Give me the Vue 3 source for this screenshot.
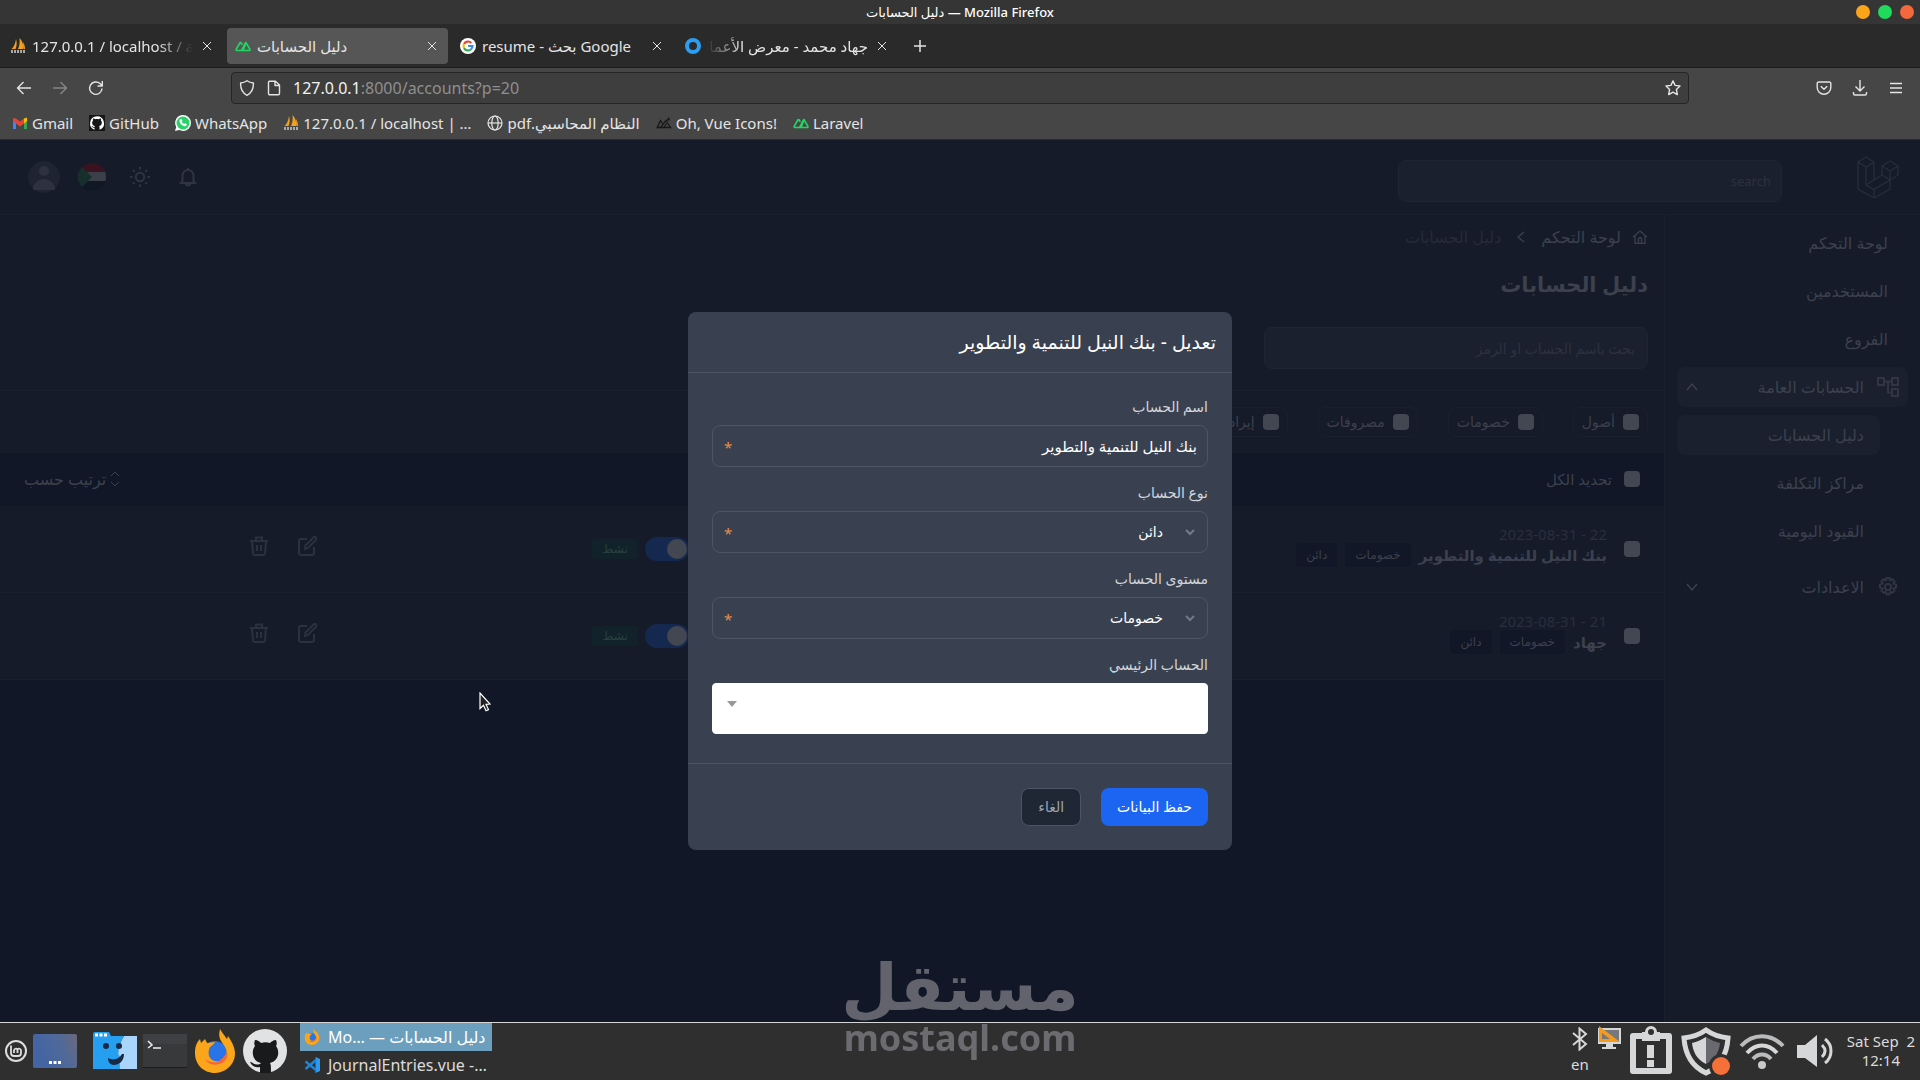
<template>
  <div class="desktop">
    <header class="browser">
      <div class="titlebar">
        <span class="window-title">دليل الحسابات — Mozilla Firefox</span>
        <div class="window-buttons">
          <button class="dot orange" aria-label="Minimize"></button>
          <button class="dot green" aria-label="Maximize"></button>
          <button class="dot red" aria-label="Close"></button>
        </div>
      </div>

      <nav class="tabs">
        <div v-for="t in tabs" :key="t.icon" class="tab" :class="{ active: t.active, 'fade-end': t.fade === 'end', 'fade-start': t.fade === 'start' }">
          <svg class="fav" viewBox="0 0 16 16"><use :href="'#i-' + t.icon" /></svg>
          <span class="tab-text" :dir="t.dir">{{ t.title }}</span>
          <button class="tab-close" aria-label="Close tab">
            <svg viewBox="0 0 10 10"><path d="M1 1l8 8M9 1L1 9" /></svg>
          </button>
        </div>
        <button class="new-tab" aria-label="New tab">
          <svg viewBox="0 0 14 14"><path d="M7 1v12M1 7h12" /></svg>
        </button>
      </nav>

      <div class="toolbar">
        <div class="nav-buttons">
          <button class="tool" aria-label="Back"><svg viewBox="0 0 16 16"><path d="M15 8H1.500M7.500 2L1.500 8l6 6" /></svg></button>
          <button class="tool off" aria-label="Forward"><svg viewBox="0 0 16 16"><path d="M1 8h13.500M8.500 2l6 6-6 6" /></svg></button>
          <button class="tool" aria-label="Reload"><svg viewBox="0 0 16 16"><path d="M14 8.500A6.200 6.200 0 1 1 12 3.600L14 5.500M14.300 1v5H9.500" /></svg></button>
        </div>
        <div class="urlbar">
          <svg class="url-icon" viewBox="0 0 16 16"><path d="M8 .8c2 1.500 4 2 6.400 2.200C14.600 8.500 13 13 8 15.300 3 13 1.400 8.500 1.600 3 4 2.800 6 2.300 8 .8z" /></svg>
          <svg class="url-icon" viewBox="0 0 16 16"><path d="M3.500 1.200h6L13.500 5v8.500a1.300 1.300 0 0 1-1.300 1.300H3.800a1.300 1.300 0 0 1-1.300-1.300V2.200a1 1 0 0 1 1-1zM9 1.500V5.500h4.500" /></svg>
          <div class="url" dir="ltr"><b>127.0.0.1</b>:8000/accounts?p=20</div>
          <svg class="url-icon" viewBox="0 0 16 16"><path d="M8 .9l2.100 4.500 4.900.6-3.600 3.400.9 5.200L8 12.100l-4.300 2.500.9-5.200L1 6l4.900-.6z" /></svg>
        </div>
        <div class="nav-buttons end">
          <button class="tool" aria-label="Pocket"><svg viewBox="0 0 16 16"><path d="M2.500 2h11a1.300 1.300 0 0 1 1.300 1.300V7.500a6.800 6.800 0 0 1-13.600 0V3.300A1.300 1.300 0 0 1 2.500 2zM4.800 6.200L8 9.300l3.200-3.100" /></svg></button>
          <button class="tool" aria-label="Downloads"><svg viewBox="0 0 16 16"><path d="M8 0v10.500M3.500 6.500L8 11l4.500-4.500M1.500 12v1.500A1.500 1.500 0 0 0 3 15h10a1.500 1.500 0 0 0 1.500-1.500V12" /></svg></button>
          <button class="tool" aria-label="Menu"><svg viewBox="0 0 16 16"><path d="M2 3.500h12M2 8h12M2 12.500h12" /></svg></button>
        </div>
      </div>

      <div class="bookmarks">
        <a v-for="b in bookmarks" :key="b.title" href="#" class="bookmark">
          <svg class="fav" viewBox="0 0 16 16"><use :href="'#i-' + b.icon" /></svg>
          <span :dir="b.dir">{{ b.title }}</span>
        </a>
      </div>
    </header>

    <div class="app" dir="rtl">
      <div class="app-header">
        <svg class="brand" viewBox="0 0 42 42">
          <path d="M1 6l8-5 8 5v18l8-5V10l8-5 8 5v9l-8 5v9L17 42 1 33zM1 6l8 5 8-5M9 11v18l8 4.500V42M9 29l16-10 8 5M17 33.500L33 24M25 10l8 5 8-5M33 15v9" />
        </svg>
        <input class="top-search" type="search" placeholder="search" aria-label="search" />
        <div class="header-icons">
          <button aria-label="الإشعارات"><svg class="line" viewBox="0 0 20 20"><path d="M4.500 14V8.500a5.500 5.500 0 0 1 11 0V14l1.500 2H3zM10 3V1M8 16.500a2 2 0 0 0 4 0" /></svg></button>
          <button aria-label="المظهر"><svg class="line" viewBox="0 0 20 20"><circle cx="10" cy="10" r="4.200" /><path d="M10 0v2.500M10 17.500V20M0 10h2.500M17.500 10H20M3 3l1.700 1.700M15.300 15.300L17 17M3 17l1.700-1.700M15.300 4.700L17 3" /></svg></button>
          <button aria-label="اللغة">
            <svg class="flag" viewBox="0 0 28 28">
              <clipPath id="flagclip"><circle cx="14" cy="14" r="14" /></clipPath>
              <g clip-path="url(#flagclip)">
                <path fill="#3b1320" d="M0 0h28v9H0z" /><path fill="#3a3f4a" d="M0 9h28v9H0z" /><path fill="#111825" d="M0 18h28v10H0z" /><path fill="#172f2c" d="M0 0l14 14L0 28z" />
              </g>
            </svg>
          </button>
          <button aria-label="الحساب">
            <svg class="avatar" viewBox="0 0 32 32"><circle cx="16" cy="16" r="16" fill="#1e2431" /><circle cx="16" cy="10" r="5" fill="#2d323e" /><path fill="#2d323e" d="M5 29c0-7 5-11 11-11s11 4 11 11z" /></svg>
          </button>
        </div>
      </div>

      <div class="app-body">
        <aside class="sidebar">
          <a v-for="m in menu" :key="m" href="#" class="side-link">{{ m }}</a>
          <a href="#" class="side-link group open">
            <svg class="side-icon" viewBox="0 0 22 20"><path d="M1 1h6v7H1zM15 1h6v7h-6zM15 12h6v7h-6zM7 4.500h8M11 4.500v11h4" /></svg>
            <span>الحسابات العامة</span>
            <svg class="caret" viewBox="0 0 12 12"><path d="M1 9l5-6 5 6" /></svg>
          </a>
          <a v-for="(m, i) in subMenu" :key="m" href="#" class="side-link sub" :class="{ current: i === 0 }">{{ m }}</a>
          <a href="#" class="side-link group settings">
            <svg class="side-icon" viewBox="0 0 22 20"><circle cx="11" cy="10" r="3" /><path d="M9.500 1h3l.7 2.400 2.200-1.200 2.200 2.200-1.200 2.200 2.600.8v3.200l-2.600.8 1.200 2.200-2.200 2.200-2.200-1.200-.7 2.600h-3l-.7-2.600-2.200 1.200-2.200-2.200 1.200-2.200L3 10.600V7.400l2.600-.8-1.200-2.200 2.200-2.200 2.200 1.200z" /></svg>
            <span>الاعدادات</span>
            <svg class="caret" viewBox="0 0 12 12"><path d="M1 3l5 6 5-6" /></svg>
          </a>
        </aside>

        <main class="content">
          <section class="top">
            <div class="crumbs">
              <svg class="home" viewBox="0 0 14 14"><path d="M0 7l7-6 7 6M2 6v7.300h10V6M5.500 13V9a1.500 1.500 0 0 1 3 0v4" /></svg>
              <a href="#">لوحة التحكم</a>
              <svg class="sep" viewBox="0 0 8 12"><path d="M7 1L1 6l6 5" /></svg>
              <span>دليل الحسابات</span>
            </div>
            <h1>دليل الحسابات</h1>
            <input class="search" type="search" placeholder="بحث باسم الحساب او الرمز" aria-label="بحث باسم الحساب او الرمز" />
          </section>

          <section class="filters">
            <label v-for="f in filters" :key="f" class="chip"><input type="checkbox" />{{ f }}</label>
          </section>

          <table class="accounts">
            <colgroup><col class="c-name" /><col class="c-status" /><col class="c-actions" /></colgroup>
            <thead>
              <tr>
                <th><label class="select-all"><input type="checkbox" />تحديد الكل</label></th>
                <th></th>
                <th>
                  <button class="sort">
                    <svg viewBox="0 0 10 16"><path d="M1 5l4-4 4 4M1 11l4 4 4-4" /></svg>ترتيب حسب
                  </button>
                </th>
              </tr>
            </thead>
            <tbody>
              <tr v-for="a in accounts" :key="a.id">
                <td>
                  <div class="account">
                    <input type="checkbox" :aria-label="a.name" />
                    <div class="info">
                      <div class="date" dir="ltr">{{ a.date }} - {{ a.id }}</div>
                      <div class="name-line"><strong>{{ a.name }}</strong><span class="tag">خصومات</span><span class="tag">دائن</span></div>
                    </div>
                  </div>
                </td>
                <td>
                  <div class="status"><input type="checkbox" class="toggle" checked :aria-label="'حالة ' + a.name" /><span class="badge">نشط</span></div>
                </td>
                <td>
                  <div class="actions">
                    <button aria-label="تعديل"><svg viewBox="0 0 20 20"><path d="M10 3H4a2 2 0 0 0-2 2v12a2 2 0 0 0 2 2h11a2 2 0 0 0 2-2v-6M8 13l.5-3.500L16.500 1.500a1.500 1.500 0 0 1 2.500 2.200L11 12z" /></svg></button>
                    <button aria-label="حذف"><svg viewBox="0 0 20 20"><path d="M1 5h18M3 5l1 12.500A1.600 1.600 0 0 0 5.500 19h9a1.600 1.600 0 0 0 1.500-1.500L17 5M7 5V1.500h6V5M8 9v6M12 9v6" /></svg></button>
                  </div>
                </td>
              </tr>
            </tbody>
          </table>
        </main>
      </div>

      <div class="overlay">
        <form class="modal" role="dialog" aria-labelledby="modal-title" @submit.prevent>
          <h2 id="modal-title">تعديل - بنك النيل للتنمية والتطوير</h2>
          <div class="modal-body">
            <div class="field">
              <label for="name">اسم الحساب</label>
              <div class="control">
                <input id="name" v-model="form.name" type="text" />
                <span class="required">*</span>
              </div>
            </div>
            <div class="field">
              <label for="type">نوع الحساب</label>
              <div class="control">
                <select id="type" v-model="form.type"><option>دائن</option><option>مدين</option></select>
                <svg class="arrow" viewBox="0 0 10 8"><path d="M1 2l4 4 4-4" /></svg>
                <span class="required">*</span>
              </div>
            </div>
            <div class="field">
              <label for="level">مستوى الحساب</label>
              <div class="control">
                <select id="level" v-model="form.level"><option v-for="f in filters" :key="f">{{ f }}</option></select>
                <svg class="arrow" viewBox="0 0 10 8"><path d="M1 2l4 4 4-4" /></svg>
                <span class="required">*</span>
              </div>
            </div>
            <div class="field">
              <label for="parent">الحساب الرئيسي</label>
              <div class="control">
                <select id="parent" v-model="form.parent" class="plain"><option value=""></option></select>
                <svg class="triangle" viewBox="0 0 10 6"><path d="M0 0h10L5 6z" /></svg>
              </div>
            </div>
          </div>
          <div class="modal-footer">
            <button class="save" type="submit">حفظ البيانات</button>
            <button class="cancel" type="button">الغاء</button>
          </div>
        </form>
      </div>
      <svg class="cursor" viewBox="0 0 12 20"><path d="M1 1v15.500l3.500-3.300 2.500 5.600 2.500-1.200L7 12.300l4-.3z" /></svg>
    </div>

    <footer class="taskbar">
      <div class="launchers">
        <button class="launcher small" aria-label="Menu">
          <svg viewBox="0 0 22 22"><circle cx="11" cy="11" r="10" fill="none" stroke="#ddd" stroke-width="2" /><path d="M6 5.500v7.500a3 3 0 0 0 3 3h4a3 3 0 0 0 3-3v-2.500a2 2 0 0 0-3.500-1.200A2 2 0 0 0 9 10.500V13M12.500 10v3" fill="none" stroke="#ddd" stroke-width="1.800" /></svg>
        </button>
        <button class="launcher" aria-label="Desktop">
          <svg viewBox="0 0 44 44">
            <linearGradient id="desk" x2="1" y2="-.3"><stop stop-color="#4465a3" /><stop offset=".5" stop-color="#50699a" /><stop offset="1" stop-color="#6e6a74" /></linearGradient>
            <rect y="5" width="44" height="34" rx="2" fill="url(#desk)" /><path fill="#fff" d="M16 32h3v3h-3zM20.500 32h3v3h-3zM25 32h3v3h-3z" />
          </svg>
        </button>
        <button class="launcher files" aria-label="Files">
          <svg viewBox="0 0 44 44"><path fill="#279ff0" d="M0 5a2 2 0 0 1 2-2h14l2 4h9v33H0z" /><path fill="#a9d4fb" d="M31 7h13v33H27c0-7-1-10 0-13-3 0-2-11 4-20z" /><path fill="#279ff0" d="M26 7h5c-5 8-6 13-5 17z" /><path d="M2 6h12" stroke="#fff" stroke-width="3" stroke-dasharray="3 1.500" /><circle cx="13" cy="17" r="3" fill="#182943" /><circle cx="26" cy="17" r="3" fill="#182943" /><path fill="#182943" d="M15 29c6 3 11 1 14-4h2c0 7-5 11-10 11-4 0-6-3-6-7z" /></svg>
        </button>
        <button class="launcher" aria-label="Terminal">
          <svg viewBox="0 0 44 44"><rect y="5" width="44" height="34" rx="1" fill="#38393a" /><path fill="#45484b" d="M0 5h44v10H0z" opacity=".5" /><path d="M0 38.500h44" stroke="#1d1d1d" /><path d="M5 12l4 4-4 3M10 19h8" fill="none" stroke="#eee" stroke-width="1.500" /></svg>
        </button>
        <button class="launcher" aria-label="Firefox"><svg viewBox="0 0 44 44"><use href="#i-firefox" /></svg></button>
        <button class="launcher" aria-label="GitHub Desktop">
          <svg viewBox="0 0 44 44"><circle cx="22" cy="22" r="22" fill="#e1e2e4" /><path fill="#191a1c" d="M12 11c3 0 5 2 6 3 3-1 6-1 9 0 1-1 3-3 6-3 1 3 1 4 0 6 4 5 3 15-6 17 1 2 1 3 1 10H17v-6c-5 1-8-1-10-5 3 0 4 4 10 2l1-1c-9-2-10-12-6-17-1-2-1-3 0-6z" /></svg>
        </button>
      </div>
      <div class="tasks">
        <button class="task on" dir="ltr">
          <svg class="fav" viewBox="0 0 44 44"><use href="#i-firefox" /></svg>
          <span dir="rtl">دليل الحسابات — <bdi>Mo…</bdi></span>
        </button>
        <button class="task">
          <svg class="fav" viewBox="0 0 16 16"><path fill="#2a9bf2" d="M11.500 0L16 2v12l-4.500 2z" /><path d="M12 3L1.500 12M12 13L1.500 4.500" stroke="#1f83d6" stroke-width="2.500" fill="none" /></svg>
          <span>JournalEntries.vue -…</span>
        </button>
      </div>
      <div class="tray">
        <div class="tray-grid">
          <svg viewBox="0 0 16 24"><path d="M1 6l13 11-6.500 5.500V1.500L14 7 1 18" fill="none" stroke="#d6d7d9" stroke-width="2" /></svg>
          <span>en</span>
        </div>
        <svg class="screen" viewBox="0 0 24 24"><path fill="#d6d7d9" d="M1 2h23v16H1zM9 18h7v3h3v2H5v-2h4z" /><path fill="#77787c" d="M3 4h19v12H3z" /><path fill="#f69a1d" d="M2 0l21 16H2z" /><path fill="#77787c" d="M5 7l8 6H5z" /></svg>
        <svg class="clip" viewBox="0 0 44 50"><path d="M4 10h36v35H4z" fill="none" stroke="#d6d7d9" stroke-width="6" stroke-linejoin="round" /><path fill="#d6d7d9" d="M13 6h3a6 6 0 0 1 12 0h3v9H13zM18 19h7v13h-7zM18 34h7v7h-7z" /><circle cx="22" cy="6" r="3" fill="#2f2f2f" /></svg>
        <svg class="guard" viewBox="0 0 50 50"><path d="M25 4c7 5 13 7 22 8-1 15-7 28-22 35C10 40 4 27 3 12c9-1 15-3 22-8z" fill="none" stroke="#d6d7d9" stroke-width="5" /><path fill="#d6d7d9" d="M25 11v27C15 33 12 25 11 17c5-1 9-3 14-6z" /><path fill="#6a6870" d="M25 11v27c10-5 13-13 14-21-5-1-9-3-14-6z" /><circle cx="40" cy="40" r="12" fill="#2f2f2f" /><circle cx="40" cy="40" r="9" fill="#f6703a" /></svg>
        <svg class="wifi" viewBox="0 0 46 36"><g fill="none" stroke="#b9bbbd" stroke-width="4"><path d="M2 13c12-13 30-13 42 0" /><path d="M8 20c9-10 21-10 30 0" stroke="#d6d7d9" /><path d="M14 26c5-6 13-6 18 0" /></g><circle cx="23" cy="32" r="4" fill="#c9cacc" /></svg>
        <svg class="volume" viewBox="0 0 38 34"><path fill="#d6d7d9" d="M0 11h8L20 1v32L8 24H0z" /><path d="M25 11c4 4 4 8 0 12M28 5c8 6 8 18 0 24" fill="none" stroke="#d6d7d9" stroke-width="3" /></svg>
        <time class="clock">Sat Sep&nbsp; 2<br />12:14</time>
      </div>
    </footer>

    <div class="watermark">
      <span class="wm-ar" dir="rtl">مستقل</span>
      <span class="wm-en">mostaql.com</span>
    </div>

    <!-- shared icons -->
    <svg class="sprite">
      <symbol id="i-pma" viewBox="0 0 16 16"><path fill="#f5a11c" d="M6 1c1 3 1 7-.5 10H1.500C4 9 5.500 5 6 1zM9.500 0c3 3 4.500 8 3.500 11H8c1.500-3 2-7 1.500-11zM13 4c1.500 2 2 5 2 7h-1.500z" /><path d="M1 13.500h14" stroke="#a9a9a9" stroke-width="3" stroke-dasharray="2 1" /></symbol>
      <symbol id="i-laravel" viewBox="0 0 16 16"><path d="M8.300 12.500H1.800a.7.700 0 0 1-.6-1.100L4.800 5a.8.800 0 0 1 1.400 0l1 1.800M15 12.500H8.800l-.500-.9 2.700-7 3.900 6.800a.7.700 0 0 1-.6 1.100M6.300 12.400c2-1.400 2.500-5.400 4.500-8" fill="none" stroke="#21d563" stroke-width="1.700" stroke-linejoin="round" /></symbol>
      <symbol id="i-google" viewBox="0 0 16 16"><circle cx="8" cy="8" r="8" fill="#fff" /><g fill="none" stroke-width="2.200"><path stroke="#e94235" d="M11.300 4.900A4.500 4.500 0 0 0 4 6" /><path stroke="#fabb05" d="M4 6a4.500 4.500 0 0 0 0 4" /><path stroke="#34a853" d="M4 10a4.500 4.500 0 0 0 6.800 1.500" /><path stroke="#4285f4" d="M10.800 11.500A4.500 4.500 0 0 0 12.500 8H8" /></g></symbol>
      <symbol id="i-mostaql" viewBox="0 0 16 16"><circle cx="8" cy="8" r="6" fill="none" stroke="#2b9df2" stroke-width="4" /></symbol>
      <symbol id="i-gmail" viewBox="0 0 16 16"><path fill="#4285f4" d="M1 4.500l3 2V14H1z" /><path fill="#34a853" d="M12 6.500l3-2V14h-3z" /><path fill="#fbbc04" d="M12 3.500l3-1V6l-3 2.500z" /><path fill="#ea4335" d="M1 3l3 .5 4 3 4-3v5l-4 3-4-3-3-2.500z" /></symbol>
      <symbol id="i-github" viewBox="0 0 16 16"><path fill="#161616" d="M0 0h16v16H0z" /><path fill="#fff" d="M8 1.200a7 7 0 0 0-2.500 13.500v-2C3.500 13 3 11.500 2.500 11c1.500-.2 1.500 1.300 3 1l.4-1C3 10.500 2.500 7 4 5.500c-.2-1 0-1.500.2-2 1 0 1.500.5 2 .8 1.200-.3 2.400-.3 3.600 0 .5-.3 1-.8 2-.8.200.5.400 1 .2 2 1.500 1.500 1 5-1.900 5.500.5.500.5 1 .5 3.700A7 7 0 0 0 8 1.200z" /></symbol>
      <symbol id="i-whatsapp" viewBox="0 0 16 16"><path fill="#fff" d="M8 0a8 8 0 0 1 0 16l-4-1-4 1 1.200-4A8 8 0 0 1 8 0z" /><circle cx="8" cy="8" r="6.500" fill="#25d366" /><path fill="#fff" d="M5.500 4l1.300.2.600 1.700-.6.900c.5 1 1.300 1.700 2.300 2.200l.9-.8 1.800.9c0 2-1.500 2.600-3 2C6.500 10.300 4.500 8 4.500 6c0-1 .4-1.700 1-2z" /></symbol>
      <symbol id="i-globe" viewBox="0 0 16 16"><g fill="none" stroke="#e4e4e4" stroke-width="1.200"><circle cx="8" cy="8" r="7" /><ellipse cx="8" cy="8" rx="3.200" ry="7" /><path d="M1 8h14" /></g></symbol>
      <symbol id="i-ohvue" viewBox="0 0 16 16"><path d="M5 12.500H1.200L4.500 5.500l2 3M4.500 12.500L10 5.500l4.500 7zM8 12.500l2.500-4M9.500 6.500L13 3.500M13 2.500v3" fill="none" stroke="#171717" stroke-width="1.300" /></symbol>
      <symbol id="i-firefox" viewBox="0 0 44 44"><circle cx="22" cy="24" r="12" fill="#2874e8" /><path fill="#fba51b" d="M27 0c3 5 5 7 7 10l1-3c7 10 9 18 5 26-4 7-11 11-18 11C10 44 2 35 2 24c0-7 2-11 5-14l1 4 4-4 2 4 8-1c-2 4-6 4-6 8-2 6 3 13 10 11 6-1 9-6 7-12-3-7-9-9-6-20z" /><path fill="#f0693a" d="M34 23c2 5-2 11-8 12-6 2-12-1-14-5 5 4 10 4 14 2 3-2 6-5 8-9z" /></symbol>
    </svg>
  </div>
</template>

<script setup>
import { reactive } from "vue";

const tabs = [
  { icon: "pma", title: "127.0.0.1 / localhost / a", dir: "ltr", fade: "end" },
  { icon: "laravel", title: "دليل الحسابات", dir: "ltr", active: true },
  { icon: "google", title: "resume - بحث Google", dir: "ltr" },
  { icon: "mostaql", title: "جهاد محمد - معرض الأعمال", dir: "rtl", fade: "start" },
];
const bookmarks = [
  { icon: "gmail", title: "Gmail" },
  { icon: "github", title: "GitHub" },
  { icon: "whatsapp", title: "WhatsApp" },
  { icon: "pma", title: " 127.0.0.1 / localhost | …" },
  { icon: "globe", title: "النظام المحاسبي.pdf", dir: "rtl" },
  { icon: "ohvue", title: "Oh, Vue Icons!" },
  { icon: "laravel", title: "Laravel" },
];
const menu = ["لوحة التحكم", "المستخدمين", "الفروع"];
const subMenu = ["دليل الحسابات", "مراكز التكلفة", "القيود اليومية"];
const filters = ["أصول", "خصومات", "مصروفات", "إيرادات"];
const accounts = [
  { id: 22, date: "2023-08-31", name: "بنك النيل للتنمية والتطوير" },
  { id: 21, date: "2023-08-31", name: "جهاد" },
];
const form = reactive({
  name: "بنك النيل للتنمية والتطوير",
  type: "دائن",
  level: "خصومات",
  parent: "",
});
</script>

<style>
body { background: #111726; }
</style>

<style scoped>
* { box-sizing: border-box; }
.desktop { position: relative; display: flex; flex-direction: column; min-height: 100vh; overflow: hidden; font-family: "Noto Sans", "DejaVu Sans", sans-serif; }
button { border: 0; padding: 0; background: none; color: inherit; font: inherit; }
input, select { font: inherit; margin: 0; }
a { color: inherit; text-decoration: none; }
svg { display: block; flex: none; }
.sprite { position: absolute; width: 0; height: 0; }
.fav { width: 16px; height: 16px; }

/* browser window */
.browser { color: #e4e4e4; background: #464646; font-size: 15px; line-height: 20px; border-bottom: 1px solid #2b2b2b; }
.titlebar { position: relative; display: flex; justify-content: center; align-items: center; height: 24px; background: #353535; color: #fff; font-size: 13px; font-weight: 500; }
.window-buttons { position: absolute; right: 6px; display: flex; gap: 8px; }
.dot { width: 14px; height: 14px; border-radius: 50%; }
.orange { background: #fba51b; }
.green { background: #21d95c; }
.red { background: #f3693d; }
.tabs { display: flex; align-items: center; height: 44px; padding: 0 2px; gap: 4px; background: #2a2a2a; border-bottom: 1px solid #1c1c1c; }
.tab { display: flex; align-items: center; gap: 6px; width: 221px; height: 36px; padding: 0 8px; border-radius: 4px; }
.tab.active { background: #565656; }
.tab-text { flex: 1; overflow: hidden; white-space: nowrap; }
.fade-end .tab-text { mask-image: linear-gradient(to left, transparent, #000 36px); }
.fade-start .tab-text { mask-image: linear-gradient(to right, transparent, #000 36px); }
.tab-close svg { width: 16px; height: 10px; fill: none; stroke: currentColor; stroke-width: 1; }
.new-tab { padding: 0 11px; }
.new-tab svg { width: 14px; height: 14px; stroke: currentColor; stroke-width: 1.5; }
.toolbar { display: flex; align-items: center; height: 40px; padding: 0 16px; }
.nav-buttons { display: flex; gap: 20px; width: 215px; }
.nav-buttons.end { justify-content: flex-end; }
.tool svg, .url-icon { width: 16px; height: 16px; fill: none; stroke: currentColor; stroke-width: 1.4; stroke-linejoin: round; }
.tool.off { color: #858585; }
.urlbar { display: flex; align-items: center; gap: 11px; flex: 1; height: 32px; padding: 0 7px; background: #3e3e3e; border: 1px solid #252525; border-radius: 4px; font-size: 16px; }
.url { flex: 1; color: #8f8f8f; }
.url b { color: #f2f2f2; font-weight: 400; }
.bookmarks { display: flex; align-items: flex-start; gap: 16px; height: 31px; padding: 5px 12px; white-space: nowrap; }
.bookmark { display: flex; align-items: center; gap: 4px; }

/* application */
.app { position: relative; flex: 1; display: flex; flex-direction: column; color: #3c414d; background: #111726; font-size: 14px; line-height: 20px; }
.app-header { display: flex; align-items: center; height: 75px; padding: 0 21px 0 30px; background: #151b29; border-bottom: 1px solid #1a202e; }
.brand { width: 42px; height: 42px; fill: none; stroke: #272d39; stroke-width: 1.3; }
.top-search, .search { width: 384px; height: 42px; padding: 0 12px; color: inherit; background: #1a202e; border: 1px solid #1f2532; border-radius: 8px; }
.top-search { margin-right: 75px; margin-top: 8px; padding: 0 10px; font-size: 13px; }
.top-search::placeholder, .search::placeholder { color: #2c323f; opacity: 1; }
.header-icons { display: flex; align-items: center; gap: 20px; margin-right: auto; }
.header-icons button { display: flex; justify-content: center; width: 28px; }
.header-icons .line { width: 20px; height: 20px; fill: none; stroke: #303541; stroke-width: 2; }
.flag { width: 28px; height: 28px; }
.avatar { width: 32px; height: 32px; }
.app-body { flex: 1; display: flex; }
.sidebar { display: flex; flex-direction: column; gap: 8px; width: 256px; padding: 8px 12px; background: #151b29; border-left: 1px solid #1a202e; font-size: 16px; }
.side-link { display: flex; align-items: center; height: 40px; padding: 0 20px; border-radius: 8px; }
.group { padding: 0 9px; gap: 13px; }
.group span { flex: 1; }
.open, .current { background: #1a202e; }
.sub { margin-right: 28px; padding: 0 16px; }
.settings { margin-top: 8px; }
.side-icon { width: 22px; height: 20px; fill: none; stroke: #303541; stroke-width: 2; }
.caret { width: 12px; height: 12px; fill: none; stroke: currentColor; stroke-width: 1.4; }
.content { flex: 1; min-width: 0; }
.top { height: 176px; padding: 12px 16px 0; background: #151b29; border-bottom: 1px solid #1a202e; }
.crumbs { display: flex; align-items: center; gap: 11px; font-size: 16px; }
.crumbs span { color: #252b38; }
.home { width: 16px; height: 14px; }
.sep { width: 18px; height: 12px; }
.home, .sep { fill: none; stroke: currentColor; stroke-width: 1.3; }
h1 { margin: 20px 0 25px; font-size: 21px; line-height: 35px; }
.filters { display: flex; gap: 30px; height: 62px; padding: 16px 16px; background: #151b29; }
.chip { display: flex; align-items: center; gap: 8px; height: 30px; padding: 0 8px; border: 1px solid #1a202e; border-radius: 8px; white-space: nowrap; }
input[type="checkbox"] { appearance: none; flex: none; width: 16px; height: 16px; background: #434751; border-radius: 4px; }
.accounts { width: 100%; table-layout: fixed; border-collapse: separate; border-spacing: 0; text-align: right; }
.accounts th { height: 53px; padding: 0 24px 2px; font-size: 15px; font-weight: 400; }
.accounts td { height: 87px; padding: 0 24px; background: #151b29; border-bottom: 1px solid #1a202e; vertical-align: middle; }
.c-status { width: 22%; }
.c-actions { width: 20%; }
.select-all { display: flex; align-items: center; gap: 12px; }
.sort { display: flex; align-items: center; gap: 4px; margin-right: auto; font-size: 16px; }
.sort svg { width: 10px; height: 16px; fill: none; stroke: currentColor; }
.account { display: flex; align-items: center; gap: 17px; }
.info { padding-bottom: 8px; }
.date { color: #292f3c; text-align: right; font-size: 15px; }
.name-line { display: flex; align-items: center; gap: 8px; height: 22px; }
.name-line strong { font-size: 15px; }
.tag { padding: 2px 10px; background: #111726; border-radius: 4px; font-size: 12px; white-space: nowrap; }
.accounts td:nth-child(2) { padding-right: 10px; }
.accounts td:nth-child(3) { padding-right: 16px; }
.status { display: flex; align-items: center; gap: 7px; }
.accounts .toggle { display: flex; width: 44px; height: 24px; padding: 2px; background: #15284f; border-radius: 12px; }
.toggle::after { content: ""; width: 20px; height: 20px; background: #434751; border-radius: 50%; }
.badge { padding: 0 10px; background: #12222b; color: #27413f; border-radius: 4px; font-size: 12px; }
.actions { display: flex; gap: 28px; padding-bottom: 6px; }
.actions svg { width: 20px; height: 20px; fill: none; stroke: #2b313d; stroke-width: 2; }

/* edit dialog */
.overlay { position: absolute; inset: 0; display: flex; align-items: center; justify-content: center; }
.modal { width: 544px; color: #d1d5db; background: #394150; border-radius: 8px; }
h2 { margin: 0; padding: 16px; color: #fff; font-size: 19px; font-weight: 400; line-height: 28px; border-bottom: 1px solid #4b5563; }
.modal-body { display: flex; flex-direction: column; gap: 16px; padding: 24px 24px 29px; }
.field { display: flex; flex-direction: column; gap: 8px; }
.control { position: relative; }
.control input, .control select { display: block; width: 100%; height: 42px; padding: 0 10px; appearance: none; color: #fff; background: transparent; border: 1px solid #4b5563; border-radius: 8px; }
.control input { font-size: 15px; }
.control select { padding-right: 44px; }
.control .plain { height: 51px; background: #fff; border-color: #fff; border-radius: 4px; }
.required { position: absolute; left: 12px; top: 12px; color: #e88b45; font-size: 15px; }
.arrow { position: absolute; right: 13px; top: 17px; width: 10px; height: 8px; fill: none; stroke: #747b88; stroke-width: 2; }
.triangle { position: absolute; left: 15px; top: 18px; width: 10px; height: 6px; fill: #999; }
.modal-footer { display: flex; gap: 20px; padding: 24px; border-top: 1px solid #4b5563; }
.modal-footer button { height: 38px; padding: 0 16px; border-radius: 8px; }
.modal-footer .save { color: #fff; background: #1c64f2; }
.modal-footer .cancel { color: #9ca3af; background: #1f2735; border: 1px solid #4b5563; }
.cursor { position: absolute; left: 479px; top: 552px; width: 12px; height: 20px; fill: #222; stroke: #fff; stroke-width: 1.2; }

/* taskbar */
.taskbar { display: flex; align-items: center; height: 58px; padding: 0 5px 2px; color: #dcdcdc; background: #2f2f2f; border-top: 1px solid #d6d6d6; font-size: 15px; line-height: 19px; }
.launchers { display: flex; align-items: center; gap: 6px; }
.launcher svg { width: 44px; height: 44px; }
.launcher.small svg { width: 22px; height: 22px; }
.files { margin-left: 10px; }
.tasks { align-self: stretch; width: 192px; margin-left: 13px; font-size: 16px; }
.task { display: flex; align-items: center; gap: 8px; width: 100%; height: 28px; padding: 0 4px; white-space: nowrap; }
.task.on { color: #fff; background: #6c9fbd; }
.tray { display: flex; align-items: center; gap: 8px; margin-left: auto; }
.tray-grid { display: flex; flex-direction: column; align-items: center; gap: 4px; }
.tray-grid svg { width: 16px; height: 24px; }
.screen { width: 24px; height: 24px; align-self: flex-start; }
.clip { width: 44px; height: 50px; }
.guard { width: 50px; height: 50px; }
.wifi { width: 46px; height: 36px; }
.volume { width: 38px; height: 34px; margin-left: 4px; }
.clock { margin-left: 4px; text-align: center; white-space: nowrap; }

.watermark { position: absolute; left: 0; right: 0; bottom: 22px; display: flex; flex-direction: column; align-items: center; color: #8e8c94; opacity: .65; font-weight: 700; pointer-events: none; }
.wm-ar { font-size: 65px; line-height: 66px; }
.wm-en { font-size: 36px; line-height: 40px; }
</style>
